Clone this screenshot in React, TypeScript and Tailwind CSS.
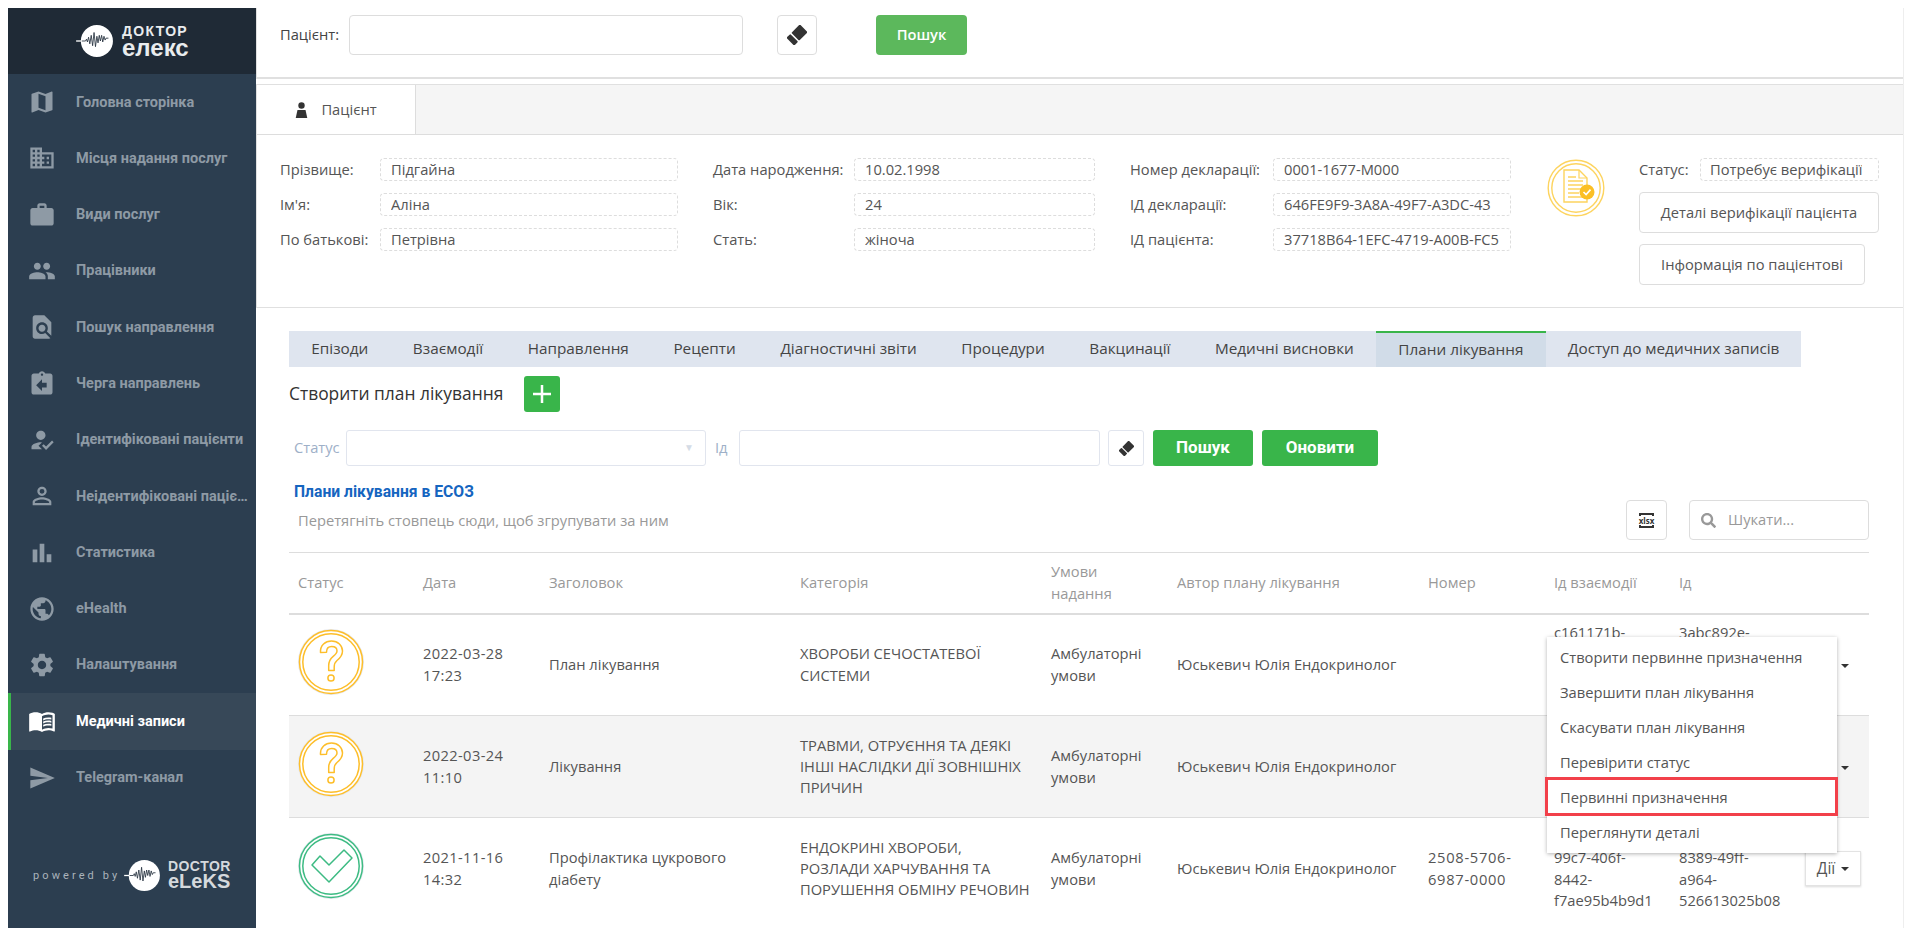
import type { ReactNode } from 'react'
import { FaSearch } from 'react-icons/fa'
import {
  MdAssignmentReturn,
  MdBarChart,
  MdBusiness,
  MdFindInPage,
  MdHowToReg,
  MdMap,
  MdMenuBook,
  MdPeople,
  MdPersonOutline,
  MdPublic,
  MdSend,
  MdSettings,
  MdWork,
} from 'react-icons/md'

const openSans = "font-['Open_Sans',sans-serif]"
const roboto = "font-['Roboto',sans-serif]"

const navItems = [
  { label: 'Головна сторінка', icon: MdMap },
  { label: 'Місця надання послуг', icon: MdBusiness },
  { label: 'Види послуг', icon: MdWork },
  { label: 'Працівники', icon: MdPeople },
  { label: 'Пошук направлення', icon: MdFindInPage },
  { label: 'Черга направлень', icon: MdAssignmentReturn },
  { label: 'Ідентифіковані пацієнти', icon: MdHowToReg },
  { label: 'Неідентифіковані пацієнти', icon: MdPersonOutline },
  { label: 'Статистика', icon: MdBarChart },
  { label: 'eHealth', icon: MdPublic },
  { label: 'Налаштування', icon: MdSettings },
  { label: 'Медичні записи', icon: MdMenuBook, active: true },
  { label: 'Telegram-канал', icon: MdSend },
]

const tabs = [
  'Епізоди',
  'Взаємодії',
  'Направлення',
  'Рецепти',
  'Діагностичні звіти',
  'Процедури',
  'Вакцинації',
  'Медичні висновки',
  'Плани лікування',
  'Доступ до медичних записів',
]

const menuItems = [
  'Створити первинне призначення',
  'Завершити план лікування',
  'Скасувати план лікування',
  'Перевірити статус',
  'Первинні призначення',
  'Переглянути деталі',
]

const columns: ReactNode[] = [
  'Статус',
  'Дата',
  'Заголовок',
  'Категорія',
  <>
    Умови
    <br />
    надання
  </>,
  'Автор плану лікування',
  'Номер',
  'Ід взаємодії',
  'Ід',
  '',
]
const colWidths = ['w-[125px]', 'w-[126px]', 'w-[251px]', 'w-[251px]', 'w-[126px]', 'w-[251px]', 'w-[126px]', 'w-[125px]', 'w-[126px]', 'w-[73px]']

function LogoMark({ className }: { className: string }) {
  return (
    <svg viewBox="0 0 40 36" className={className}>
      <circle cx="22" cy="18" r="17" fill="#fff" />
      <path d="M0 18h8" stroke="#fff" strokeWidth="1.4" fill="none" />
      <path
        d="M6 18h4l1-2 1 3 1.200-5 1.300 7 1.500-9 1.500 11 1.500-14 1.500 15 1.500-11 1.200 7 1.300-8 1.200 6 1.300-6 1.200 7 1.300-6 1.200 4 1-2h2.500"
        stroke="#26323f"
        strokeWidth="0.9"
        fill="none"
      />
    </svg>
  )
}

function EraserIcon({ className }: { className: string }) {
  return (
    <svg viewBox="0 0 20 20" className={className} fill="currentColor">
      <g transform="rotate(45 10 10)">
        <rect x="4.500" y="0.500" width="11" height="12" rx="1" />
        <rect x="4.500" y="14" width="11" height="5.500" rx="1" />
      </g>
    </svg>
  )
}

function Sidebar() {
  return (
    <aside className={`flex h-[920px] w-[248px] shrink-0 flex-col bg-[#2c3e50] ${roboto}`}>
      <div className="flex h-[66px] items-center bg-[#1f2a36] pl-[68px]">
        <LogoMark className="h-[34px] w-[38px]" />
        <div className="ml-[8px] font-['Liberation_Sans',sans-serif] font-bold text-[#e9ecee]">
          <div className="text-[14px] leading-[13px] tracking-[1.3px]">ДОКТОР</div>
          <div className="text-[24px] leading-[20px]">елекс</div>
        </div>
      </div>
      <nav>
        {navItems.map(({ label, icon: Icon, active }) => (
          <div
            key={label}
            className={`flex h-[56.3px] items-center border-l-[3px] pl-[17px] ${
              active ? 'border-[#39b54a] bg-[#374858] text-white' : 'border-transparent text-[#8e9aa5]'
            }`}
          >
            <Icon className="h-[28px] w-[28px] shrink-0" />
            <span className="ml-[20px] w-[174px] truncate text-[14.500px] font-bold">{label}</span>
          </div>
        ))}
      </nav>
      <div className="mt-[53px] flex items-center pl-[25px]">
        <span className="w-[91px] text-[11px] tracking-[3.100px] text-[#aab3bb]">powered by</span>
        <LogoMark className="h-[33px] w-[37px]" />
        <div className="ml-[7px] font-['Liberation_Sans',sans-serif] font-bold text-[#d5d9dd]">
          <div className="text-[14px] leading-[13px] tracking-[0.4px]">DOCTOR</div>
          <div className="text-[20px] leading-[17px]">eLeKS</div>
        </div>
      </div>
    </aside>
  )
}

function Field({ label, value, labelWidth, boxWidth }: { label: string; value: string; labelWidth: string; boxWidth: string }) {
  return (
    <div className="flex h-[23px] items-center">
      <span className={`${labelWidth} shrink-0 whitespace-nowrap`}>{label}</span>
      <div className={`${boxWidth} flex h-full items-center rounded-[4px] border border-dashed border-[#ddd] px-[10px]`}>
        <div className="overflow-hidden whitespace-nowrap">{value}</div>
      </div>
    </div>
  )
}

function PatientIcon() {
  return (
    <svg viewBox="0 0 14 18" className="h-[16px] w-[13px] fill-[#333]">
      <circle cx="7" cy="4" r="3.600" />
      <path d="M2.500 9h9l2 9H.5z" />
    </svg>
  )
}

function CertIcon() {
  return (
    <svg viewBox="0 0 58 58" className="h-[58px] w-[58px] shrink-0" fill="none" stroke="#fdd45f">
      <circle cx="29" cy="29" r="27.800" strokeWidth="1.400" />
      <circle cx="29" cy="29" r="24.200" strokeWidth="1.400" />
      <path d="M17 11h15l8 8v24H17z" strokeWidth="1.400" fill="#fff" />
      <path d="M32 11v8h8" strokeWidth="1.200" />
      <path d="M21 18h8M21 22h15M21 26h15M21 30h15M21 34h11M21 38h15" strokeWidth="1.600" />
      <circle cx="40" cy="33" r="7.500" fill="#fbbf24" stroke="none" />
      <path d="M36.500 33l2.600 2.600 4.400-5" stroke="#fff" strokeWidth="1.600" />
    </svg>
  )
}

function StatusIcon({ ok }: { ok?: boolean }) {
  const color = ok ? '#3dbb83' : '#fdbe2a'
  return (
    <svg viewBox="0 0 66 66" className="h-[66px] w-[66px]" fill="none" stroke={color} strokeWidth="1.500">
      <circle cx="33" cy="33" r="32.500" fill="#fff" stroke="#e4e7ee" strokeWidth="1" />
      <circle cx="33" cy="33" r="31.500" />
      <circle cx="33" cy="33" r="28.200" />
      {ok ? (
        <path d="M14 32L22 23L31 32L46 17L54 25L31 49z" strokeLinejoin="round" />
      ) : (
        <>
          <path
            d="M22.500 23.500c-.5-7.500 5-11.500 11-11.500 6.500 0 11 4.500 11 10 0 5-3 7.500-5.500 9.500-2 1.700-2.800 3-2.800 6.500v3.500h-5.500v-5c0-4.500 1.800-7 4.500-9.200 2.300-1.800 3.800-3.200 3.800-5.300 0-2.500-2-4.500-5.300-4.500-3.500 0-5.200 2.700-5.200 5.700z"
            strokeLinejoin="round"
          />
          <circle cx="33" cy="49" r="3.100" />
        </>
      )}
    </svg>
  )
}

function Caret({ className = '' }: { className?: string }) {
  return <span className={`inline-block border-x-[4px] border-t-[4px] border-x-transparent border-t-[#333] ${className}`} />
}

function Cell({ children }: { children?: ReactNode }) {
  return <td className="px-[9px] align-middle">{children}</td>
}

function Row({
  ok,
  date,
  time,
  title,
  category,
  number,
  eventId,
  planId,
  action,
  striped,
  last,
}: {
  ok?: boolean
  date: string
  time: string
  title: ReactNode
  category: ReactNode
  number?: ReactNode
  eventId: ReactNode
  planId: ReactNode
  action: ReactNode
  striped?: boolean
  last?: boolean
}) {
  return (
    <tr className={`h-[102px] ${last ? '' : 'border-b border-[#ddd]'} ${striped ? 'bg-[#f4f4f4]' : ''}`}>
      <td className="px-[9px] align-middle">
        <div className="-mt-[5px]">
          <StatusIcon ok={ok} />
        </div>
      </td>
      <td className="px-[9px] align-middle tracking-[0.36px]">
        {date}
        <br />
        {time}
      </td>
      <Cell>{title}</Cell>
      <td className="whitespace-nowrap px-[9px] align-middle">{category}</td>
      <Cell>
        Амбулаторні
        <br />
        умови
      </Cell>
      <td className="whitespace-nowrap px-[9px] align-middle">Юськевич Юлія Ендокринолог</td>
      <td className="px-[9px] align-middle tracking-[0.7px]">{number}</td>
      <Cell>{eventId}</Cell>
      <Cell>{planId}</Cell>
      <td className="pl-[9px] align-middle">{action}</td>
    </tr>
  )
}

function PlansTable() {
  return (
    <div className="relative">
      <table className="w-[1580px] table-fixed text-left">
        <colgroup>
          {colWidths.map((w, i) => (
            <col key={i} className={w} />
          ))}
        </colgroup>
        <thead>
          <tr className="h-[61px] border-y-2 border-t-[1.5px] border-[#ddd] text-[#999]">
            {columns.map((c, i) => (
              <th key={i} className="px-[9px] font-normal">
                {c}
              </th>
            ))}
          </tr>
        </thead>
        <tbody>
          <Row
            date="2022-03-28"
            time="17:23"
            title="План лікування"
            category={
              <>
                ХВОРОБИ СЕЧОСТАТЕВОЇ
                <br />
                СИСТЕМИ
              </>
            }
            eventId={
              <>
                c161171b-
                <br />
                <br />
                <br />
                &nbsp;
              </>
            }
            planId={
              <>
                3abc892e-
                <br />
                <br />
                <br />
                &nbsp;
              </>
            }
            action={<Caret className="ml-[36px] align-middle" />}
          />
          <Row
            striped
            date="2022-03-24"
            time="11:10"
            title="Лікування"
            category={
              <>
                ТРАВМИ, ОТРУЄННЯ ТА ДЕЯКІ
                <br />
                ІНШІ НАСЛІДКИ ДІЇ ЗОВНІШНІХ
                <br />
                ПРИЧИН
              </>
            }
            eventId=""
            planId=""
            action={<Caret className="ml-[36px] align-middle" />}
          />
          <Row
            ok
            last
            date="2021-11-16"
            time="14:32"
            title={
              <>
                Профілактика цукрового
                <br />
                діабету
              </>
            }
            category={
              <>
                ЕНДОКРИНІ ХВОРОБИ,
                <br />
                РОЗЛАДИ ХАРЧУВАННЯ ТА
                <br />
                ПОРУШЕННЯ ОБМІНУ РЕЧОВИН
              </>
            }
            number="2508-5706-6987-0000"
            eventId={
              <>
                <br />
                99c7-406f-
                <br />
                8442-
                <br />
                f7ae95b4b9d1
              </>
            }
            planId={
              <>
                <br />
                8389-49ff-
                <br />
                a964-
                <br />
                526613025b08
              </>
            }
            action={
              <button className="flex h-[35px] w-[56px] items-center justify-center gap-[6px] border border-[#e3e3e3] bg-white text-[15.500px] shadow-[0_1px_2px_rgba(0,0,0,0.15)]">
                Дії <Caret />
              </button>
            }
          />
        </tbody>
      </table>
      <div className="absolute left-[1258px] top-[85px] w-[290px] bg-white py-[3px] shadow-[0_1px_4px_rgba(0,0,0,0.3)]">
        {menuItems.map((item) => (
          <div key={item} className="flex h-[35px] items-center pl-[13px]">
            {item}
          </div>
        ))}
        <div className="absolute -left-[2px] top-[140px] h-[39px] w-[293px] border-[3px] border-[#f2404a]" />
      </div>
    </div>
  )
}

function PatientPanel() {
  return (
    <section className="mt-[5px] h-[224px] border-y border-l border-[#e0e0e0]">
      <div className="flex h-[50px] border-b border-[#ddd] bg-[#f5f5f5]">
        <div className="flex w-[159px] items-center justify-center gap-[13px] border-r border-[#ddd] bg-white">
          <PatientIcon />
          Пацієнт
        </div>
      </div>
      <div className="flex pl-[23px] pt-[23px]">
        <div className="flex flex-col gap-[12px]">
          <Field label="Прізвище:" value="Підгайна" labelWidth="w-[100px]" boxWidth="w-[298px]" />
          <Field label="Ім'я:" value="Аліна" labelWidth="w-[100px]" boxWidth="w-[298px]" />
          <Field label="По батькові:" value="Петрівна" labelWidth="w-[100px]" boxWidth="w-[298px]" />
        </div>
        <div className="ml-[35px] flex flex-col gap-[12px]">
          <Field label="Дата народження:" value="10.02.1998" labelWidth="w-[141px]" boxWidth="w-[241px]" />
          <Field label="Вік:" value="24" labelWidth="w-[141px]" boxWidth="w-[241px]" />
          <Field label="Стать:" value="жіноча" labelWidth="w-[141px]" boxWidth="w-[241px]" />
        </div>
        <div className="ml-[35px] flex flex-col gap-[12px]">
          <Field label="Номер декларації:" value="0001-1677-М000" labelWidth="w-[143px]" boxWidth="w-[238px]" />
          <Field label="ІД декларації:" value="646FE9F9-3A8A-49F7-A3DC-43" labelWidth="w-[143px]" boxWidth="w-[238px]" />
          <Field label="ІД пацієнта:" value="37718B64-1EFC-4719-A00B-FC5" labelWidth="w-[143px]" boxWidth="w-[238px]" />
        </div>
        <div className="ml-[36px] pt-[1px]">
          <CertIcon />
        </div>
        <div className="ml-[34px] flex w-[240px] flex-col items-start">
          <Field label="Статус:" value="Потребує верифікації" labelWidth="w-[61px]" boxWidth="w-[179px] !px-[9px]" />
          <button className="mt-[11px] h-[41px] w-[240px] rounded-[4px] border border-[#ddd]">Деталі верифікації пацієнта</button>
          <button className="mt-[11px] h-[41px] w-[226px] rounded-[4px] border border-[#ddd]">Інформація по пацієнтові</button>
        </div>
      </div>
    </section>
  )
}

export default function App() {
  return (
    <div className={`flex h-[928px] w-[1912px] overflow-hidden bg-white pl-[8px] pt-[8px] text-[14.700px] leading-[21.300px] text-[#555] ${openSans}`}>
      <Sidebar />
      <main className="w-[1648px] shrink-0 border-r border-[#eee]">
        <section className="flex h-[71px] items-start border-b-2 border-l border-[#e0e0e0] pl-[23px] pt-[7px] text-[#444]">
          <div className="flex h-[40px] items-center">
            <span className="w-[69px]">Пацієнт:</span>
            <input className="h-full w-[394px] rounded-[4px] border border-[#ddd] bg-white" readOnly />
            <button className="ml-[34px] flex h-full w-[40px] items-center justify-center rounded-[4px] border border-[#ddd] text-[#333]">
              <EraserIcon className="h-[20px] w-[20px]" />
            </button>
            <button className="ml-[59px] h-full w-[91px] rounded-[4px] bg-[#5cb85c] font-semibold text-white">Пошук</button>
          </div>
        </section>

        <PatientPanel />

        <div className="ml-[33px] w-[1580px]">
          <nav className="mt-[23px] flex h-[36px] w-[1512px] bg-[#dfe5ef] text-[15.300px] text-[#444]">
            {tabs.map((t) => (
              <div
                key={t}
                className={`flex items-center whitespace-nowrap px-[22.300px] ${
                  t === 'Плани лікування' ? 'border-t-[2px] border-[#39b54a] bg-[#d1dce8]' : ''
                }`}
              >
                {t}
              </div>
            ))}
          </nav>

          <div className="mt-[9px] flex h-[36px] items-center text-[17.400px] text-[#333]">
            <span className="w-[235px] whitespace-nowrap">Створити план лікування</span>
            <button className="flex h-[36px] w-[36px] items-center justify-center rounded-[3px] bg-[#39b54a]">
              <svg viewBox="0 0 18 18" className="h-[18px] w-[18px] stroke-white stroke-[2.5]">
                <path d="M9 0v18M0 9h18" />
              </svg>
            </button>
          </div>

          <div className="mt-[18px] flex h-[36px] items-center pl-[5px]">
            <span className="w-[52px] text-[#9eb0c8]">Статус</span>
            <div className="flex h-full w-[360px] items-center justify-end rounded-[3px] border border-[#e1e5ee] pr-[11px] text-[10px] text-[#d5dce6]">▼</div>
            <span className="ml-[9px] w-[24px] text-[#9eb0c8]">Ід</span>
            <input className="h-full w-[361px] rounded-[3px] border border-[#e1e5ee]" readOnly />
            <button className="ml-[8px] flex h-full w-[36px] items-center justify-center rounded-[3px] border border-[#e1e5ee] text-[#333]">
              <EraserIcon className="h-[15px] w-[15px]" />
            </button>
            <button className={`ml-[9px] h-full w-[100px] rounded-[3px] bg-[#39b54a] text-[17px] font-bold text-white ${roboto}`}>Пошук</button>
            <button className={`ml-[9px] h-full w-[116px] rounded-[3px] bg-[#39b54a] text-[17px] font-bold text-white ${roboto}`}>Оновити</button>
          </div>

          <div className={`mt-[16px] h-[20px] pl-[5px] text-[15.700px] font-bold leading-[20px] text-[#1565c0] ${roboto}`}>Плани лікування в ЕСОЗ</div>

          <div className="flex h-[40px] items-start justify-between text-[#999]">
            <span className="ml-[9px] mt-[8px]">Перетягніть стовпець сюди, щоб згрупувати за ним</span>
            <div className="-mt-[2px] flex h-[40px] items-center gap-[22px]">
              <button className="flex h-full w-[41px] flex-col items-center justify-center rounded-[4px] border border-[#ddd]">
                <span className="h-[3px] w-[15px] border-x-2 border-t-2 border-[#333]" />
                <span className="text-[8px] font-bold leading-[9px] text-[#333]">xlsx</span>
                <span className="h-[3px] w-[15px] border-x-2 border-b-2 border-[#333]" />
              </button>
              <div className="flex h-full w-[180px] items-center rounded-[4px] border border-[#ddd] pl-[11px]">
                <FaSearch className="h-[15px] w-[15px] text-[#999]" />
                <span className="ml-[12px]">Шукати...</span>
              </div>
            </div>
          </div>

          <div className="mt-[10px]">
            <PlansTable />
          </div>
        </div>
      </main>
    </div>
  )
}
